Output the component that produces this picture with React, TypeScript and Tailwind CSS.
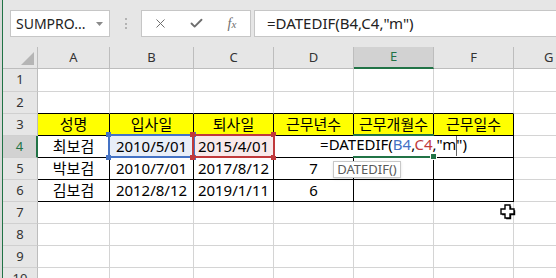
import React from 'react';
import { X, Check } from 'lucide-react';

const COLS = [
    { label: 'A', w: 'w-[72px]' },
    { label: 'B', w: 'w-[84px]' },
    { label: 'C', w: 'w-[80px]' },
    { label: 'D', w: 'w-[80px]' },
    { label: 'E', w: 'w-[80px]' },
    { label: 'F', w: 'w-[80px]' },
];

const ROWS: { n: number; h: string; cells: string[] }[] = [
    { n: 1, h: 'h-[23px]', cells: [] },
    { n: 2, h: 'h-[22px]', cells: [] },
    { n: 3, h: 'h-[22px]', cells: ['성명', '입사일', '퇴사일', '근무년수', '근무개월수', '근무일수'] },
    { n: 4, h: 'h-[22px]', cells: ['최보검', '2010/5/01', '2015/4/01', '', '', ''] },
    { n: 5, h: 'h-[22px]', cells: ['박보검', '2010/7/01', '2017/8/12', '7', '', ''] },
    { n: 6, h: 'h-[22px]', cells: ['김보검', '2012/8/12', '2019/1/11', '6', '', ''] },
    { n: 7, h: 'h-[22px]', cells: [] },
    { n: 8, h: 'h-[22px]', cells: [] },
    { n: 9, h: 'h-[22px]', cells: [] },
    { n: 10, h: 'h-[22px]', cells: [] },
];

function FormulaBar() {
    return (
        <div className="h-[47px] flex items-start pt-[10px] shrink-0">
            {/* Name box */}
            <div className="ml-[7px] w-[100px] h-[27px] bg-white border border-[#c6c6c6] flex items-center justify-between pl-[5px] pr-[6px]">
                <span className="text-[14px] text-[#222] leading-none">SUMPRO...</span>
                <svg width="7" height="4" viewBox="0 0 7 4">
                    <polygon points="0,0 7,0 3.5,4" fill="#8a8a8a" />
                </svg>
            </div>

            {/* Grip */}
            <div className="w-[31px] h-[27px] flex flex-col items-center justify-center gap-[2.5px]">
                <div className="w-[2px] h-[2px] bg-[#b3b3b3]" />
                <div className="w-[2px] h-[2px] bg-[#b3b3b3]" />
                <div className="w-[2px] h-[2px] bg-[#b3b3b3]" />
            </div>

            {/* Cancel / enter / fx */}
            <div className="w-[110px] h-[27px] bg-white border border-[#c6c6c6] flex">
                <div className="w-[36px] flex items-center justify-center text-[#6e6e6e]">
                    <X size={15} strokeWidth={1.6} />
                </div>
                <div className="w-[36px] flex items-center justify-center text-[#6e6e6e]">
                    <Check size={15} strokeWidth={3} />
                </div>
                <div className="w-[36px] flex items-center justify-center text-[#6e6e6e]">
                    <span className="font-['Liberation_Serif',serif] italic text-[14px] leading-none">
                        f<span className="text-[11px]">x</span>
                    </span>
                </div>
            </div>

            {/* Formula input */}
            <div className="ml-[3px] flex-1 h-[27px] bg-white border border-r-0 border-[#c6c6c6] flex items-center pl-[12px]">
                <span className="text-[15px] text-[#222] leading-none whitespace-nowrap">=DATEDIF(B4,C4,"m")</span>
            </div>
        </div>
    );
}

function HeaderRow() {
    return (
        <div className="flex h-[22px] shrink-0">
            <div className="w-[35px] relative border-r border-b border-[#bdbdbd]">
                <svg className="absolute right-[3px] bottom-[3px]" width="13" height="13" viewBox="0 0 13 13">
                    <polygon points="13,0 13,13 0,13" fill="#b5b5b5" />
                </svg>
            </div>
            {COLS.map((c) => (
                <div
                    key={c.label}
                    className={
                        c.label === 'E'
                            ? `${c.w} flex items-center justify-center text-[13px] bg-[#d2d2d2] text-[#217346] border-r border-r-[#bdbdbd] border-b-2 border-b-[#217346]`
                            : `${c.w} flex items-center justify-center text-[13px] text-[#333] border-r border-b border-[#bdbdbd]`
                    }
                >
                    {c.label}
                </div>
            ))}
            <div className="flex-1 flex items-center justify-start pl-[30px] text-[13px] text-[#333] border-b border-[#bdbdbd]">G</div>
        </div>
    );
}

function GridRow({ n, h, cells }: { n: number; h: string; cells: string[] }) {
    const inTable = n >= 3 && n <= 6;
    return (
        <div className={`flex ${h} shrink-0`}>
            <div
                className={
                    n === 4
                        ? 'w-[35px] flex items-center justify-center text-[13px] bg-[#d2d2d2] text-[#217346] border-r-2 border-r-[#217346] border-b border-b-[#d0d0d0]'
                        : 'w-[35px] flex items-center justify-center text-[13px] text-[#333] border-r border-r-[#bdbdbd] border-b border-b-[#d0d0d0]'
                }
            >
                {n}
            </div>
            {COLS.map((c, i) => {
                let border = 'border-r border-b border-[#d4d4d4]';
                if (inTable) border = 'border-r border-b border-black';
                else if (n === 2) border = 'border-r border-r-[#d4d4d4] border-b border-b-black';
                let bg = 'bg-white';
                if (n === 3) bg = 'bg-[#ffff00]';
                if (n === 4 && i === 1) bg = 'bg-[#e8eef8]';
                if (n === 4 && i === 2) bg = 'bg-[#f8e9ea]';
                return (
                    <div key={c.label} className={`${c.w} ${border} ${bg} flex items-center justify-center text-[15px] text-black whitespace-nowrap`}>
                        {cells[i] || ''}
                    </div>
                );
            })}
            <div className="flex-1 bg-white border-b border-[#d4d4d4]" />
        </div>
    );
}

export default function App() {
    return (
        <div className="relative w-[556px] h-[278px] overflow-hidden bg-[#e6e6e6] flex font-['Noto_Sans','Noto_Sans_CJK_KR',sans-serif]">
            <div className="w-[2px] bg-[#d9d9d9] shrink-0" />
            <div className="w-px bg-[#217346] shrink-0" />
            <div className="flex-1 flex flex-col min-w-0">
                <FormulaBar />
                <HeaderRow />
                {ROWS.map((r) => (
                    <GridRow key={r.n} {...r} />
                ))}
            </div>

            {/* B4 reference highlight */}
            <div className="absolute left-[108px] top-[134px] w-[87px] h-[24px] border-2 border-[#4472c4]" />
            <div className="absolute left-[106px] top-[132px] w-[5px] h-[5px] bg-[#4472c4]" />
            <div className="absolute left-[191px] top-[132px] w-[5px] h-[5px] bg-[#4472c4]" />
            <div className="absolute left-[106px] top-[155px] w-[5px] h-[5px] bg-[#4472c4]" />
            <div className="absolute left-[191px] top-[155px] w-[5px] h-[5px] bg-[#4472c4]" />

            {/* C4 reference highlight */}
            <div className="absolute left-[192px] top-[134px] w-[83px] h-[24px] border-2 border-[#c0393b]" />
            <div className="absolute left-[190px] top-[132px] w-[5px] h-[5px] bg-[#c0393b]" />
            <div className="absolute left-[271px] top-[132px] w-[5px] h-[5px] bg-[#c0393b]" />
            <div className="absolute left-[190px] top-[155px] w-[5px] h-[5px] bg-[#c0393b]" />
            <div className="absolute left-[271px] top-[155px] w-[5px] h-[5px] bg-[#c0393b]" />

            {/* E4 in edit mode */}
            <div className="absolute left-[275px] top-[136px] w-[237px] h-[20px] bg-white flex items-center justify-center">
                <span className="text-[15px] text-black leading-none whitespace-nowrap">
                    =DATEDIF(<span className="text-[#4472c4]">B4</span>,<span className="text-[#c0393b]">C4</span>,"m
                    <span className="inline-block w-px h-[20px] bg-[#666] align-middle -mx-[0.5px]" />
                    ")
                </span>
            </div>
            <div className="absolute left-[353px] top-[134px] w-[81px] h-[2px] bg-[#217346]" />
            <div className="absolute left-[353px] top-[156px] w-[79px] h-[2px] bg-[#217346]" />
            <div className="absolute left-[430px] top-[153px] w-[7px] h-[7px] bg-[#217346] border border-white" />

            {/* Function tooltip */}
            <div className="absolute left-[333px] top-[161px] w-[68px] h-[17px] bg-white border border-[#c8c8c8] shadow-sm flex items-center justify-center">
                <span className="text-[13px] text-[#5a5a5a] leading-none">DATEDIF()</span>
            </div>

            {/* Mouse cursor */}
            <svg className="absolute left-[499px] top-[203px]" width="17" height="17" viewBox="0 0 17 17">
                <polygon points="6,2 11,2 11,6 15,6 15,11 11,11 11,15 6,15 6,11 2,11 2,6 6,6" fill="#000" transform="translate(1.2,1.2)" />
                <polygon points="6,2 11,2 11,6 15,6 15,11 11,11 11,15 6,15 6,11 2,11 2,6 6,6" fill="#fff" stroke="#000" strokeWidth="1.4" />
            </svg>
        </div>
    );
}
